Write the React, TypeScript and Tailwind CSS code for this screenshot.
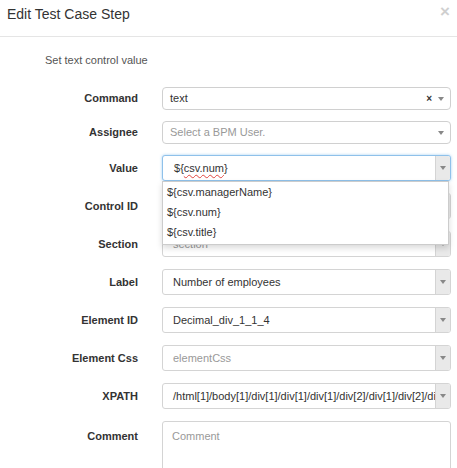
import type { ReactNode } from "react";

const Caret = () => (
  <span className="block w-0 h-0 border-l-[3px] border-r-[3px] border-t-[4px] border-l-transparent border-r-transparent border-t-[#888]" />
);

type InputProps = {
  value?: string;
  placeholder?: string;
  focused?: boolean;
  children?: ReactNode;
};

// input con addon gris a la derecha (estilo typeahead)
const ComboInput = ({ value, placeholder, focused, children }: InputProps) => (
  <div className="relative w-full">
    <div
      className={
        focused
          ? "flex h-[26px] w-full rounded-[3px] border border-[#8fc1ea] shadow-[0_0_3px_rgba(102,175,233,0.6)] bg-white"
          : "flex h-[26px] w-full rounded-[3px] border border-[#d4d4d4] bg-white"
      }
    >
      <div className="flex-1 min-w-0 flex items-center pl-[10px] overflow-hidden whitespace-nowrap">
        {value ? (
          <span className="text-[#333]">{value}</span>
        ) : (
          <span className="text-[#999]">{placeholder}</span>
        )}
        {children}
      </div>
      <div className="w-[15px] shrink-0 flex items-center justify-center bg-[#e9e9e9] border-l border-[#d4d4d4] rounded-r-[2px]">
        <Caret />
      </div>
    </div>
  </div>
);

const FormRow = ({ label, children, height = "h-[26px]" }: { label: string; children: ReactNode; height?: string }) => (
  <div className={`flex items-center ${height}`}>
    <div className="w-[138px] shrink-0 text-right font-bold text-[#333]">{label}</div>
    <div className="ml-[24px] flex-1 min-w-0 h-full">{children}</div>
  </div>
);

export default function App() {
  const opciones = ["${csv.managerName}", "${csv.num}", "${csv.title}"];

  return (
    <div className="w-[457px] h-[468px] overflow-hidden bg-white text-[11px] font-['Liberation_Sans',Arial,sans-serif]">
      {/* Header */}
      <div className="flex items-start justify-between h-[37px] border-b border-[#e5e5e5] pl-[7px] pr-[7px] pt-[5px]">
        <h2 className="text-[14px] leading-[18px] text-[#333]">Edit Test Case Step</h2>
        <span className="text-[17px] leading-[14px] font-bold text-[#cfcfcf]">×</span>
      </div>

      {/* Body */}
      <div className="pr-[6px]">
        <p className="pl-[45px] pt-[17px] leading-[13px] text-[#555]">Set text control value</p>

        <div className="flex flex-col mt-[20px]">
          <FormRow label="Command" height="h-[23px]">
            <div className="flex items-center h-full rounded-[4px] border border-[#d0d0d0] bg-white pl-[7px] pr-[6px]">
              <span className="flex-1 text-[#333]">text</span>
              <span className="text-[10px] font-bold text-[#333] mr-[6px] leading-none">×</span>
              <Caret />
            </div>
          </FormRow>

          <div className="mt-[11px]">
            <FormRow label="Assignee" height="h-[23px]">
              <div className="flex items-center h-full rounded-[4px] border border-[#d0d0d0] bg-white pl-[7px] pr-[6px]">
                <span className="flex-1 text-[#999]">Select a BPM User.</span>
                <Caret />
              </div>
            </FormRow>
          </div>

          <div className="flex flex-col gap-[12px] mt-[11px]">
            <div className="relative z-10">
              <FormRow label="Value">
                <div className="relative h-full">
                  <ComboInput focused value="">
                    <span className="text-[#333] pl-px">
                      ${"{"}
                      <span className="underline decoration-wavy decoration-[#e0443e] decoration-1 underline-offset-2">csv.num</span>
                      {"}"}
                    </span>
                  </ComboInput>
                  <ul className="absolute left-0 right-[2px] top-[26px] bg-white border border-[#ccc] shadow-[0_3px_6px_rgba(0,0,0,0.15)] pb-[2px]">
                    {opciones.map((o) => (
                      <li key={o} className="h-[20px] leading-[20px] pl-[4px] text-[#333]">
                        {o}
                      </li>
                    ))}
                  </ul>
                </div>
              </FormRow>
            </div>

            <FormRow label="Control ID">
              <ComboInput />
            </FormRow>
            <FormRow label="Section">
              <ComboInput placeholder="section" />
            </FormRow>
            <FormRow label="Label">
              <ComboInput value="Number of employees" />
            </FormRow>
            <FormRow label="Element ID">
              <ComboInput value="Decimal_div_1_1_4" />
            </FormRow>
            <FormRow label="Element Css">
              <ComboInput placeholder="elementCss" />
            </FormRow>
            <FormRow label="XPATH">
              <ComboInput value="/html[1]/body[1]/div[1]/div[1]/div[1]/div[2]/div[1]/div[2]/div[1]/input[1]" />
            </FormRow>

            <div className="flex items-start">
              <div className="w-[138px] shrink-0 text-right font-bold text-[#333] pt-[7px]">Comment</div>
              <div className="ml-[24px] flex-1 h-[90px] rounded-[3px] border border-[#d4d4d4] pl-[9px] pt-[6px] text-[#999]">
                Comment
              </div>
            </div>
          </div>
        </div>
      </div>
    </div>
  );
}
